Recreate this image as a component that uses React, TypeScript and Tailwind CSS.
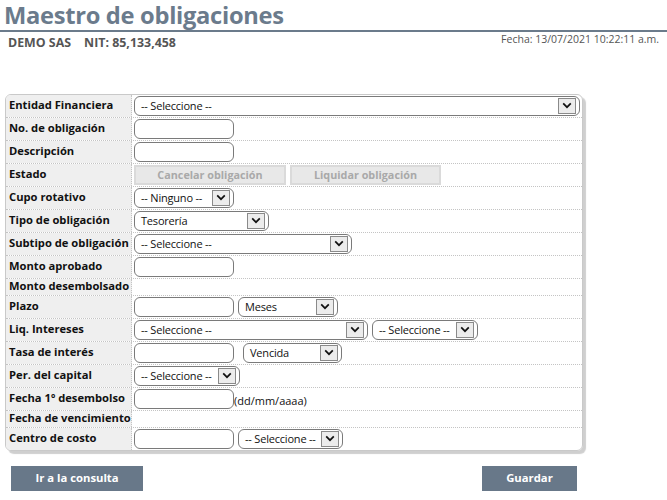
import React from "react";

const Chevron = () => (
  <svg width="10" height="7" viewBox="0 0 10 7">
    <path d="M1.2 1.4 L5 5.2 L8.8 1.4" stroke="#111" strokeWidth="1.7" fill="none" />
  </svg>
);

function Select({ w, text }: { w: string; text: string }) {
  return (
    <div className={`${w} h-[20px] rounded-[6px] border border-[#7a7a7a] bg-white flex items-center justify-between pl-[6px] pr-[3px] shrink-0`}>
      <span className="text-[11px] tracking-[-0.2px] text-[#111] leading-none whitespace-nowrap">{text}</span>
      <div className="w-[18px] h-[16px] border border-[#8a8a8a] bg-[#ececec] flex items-center justify-center shrink-0">
        <Chevron />
      </div>
    </div>
  );
}

function Input() {
  return <div className="w-[100px] h-[20px] rounded-[6px] border border-[#7a7a7a] bg-white shrink-0" />;
}

function Row({ label, children, short, last }: { label: string; children?: React.ReactNode; short?: boolean; last?: boolean }) {
  return (
    <div className={`flex ${last ? "" : "border-b border-dotted border-[#c4c4c4]"}`}>
      <div className={`w-[126px] shrink-0 bg-[#efefef] border-r border-dotted border-[#c4c4c4] pl-[3px] flex items-center ${short ? "h-[16px]" : "h-[22px]"}`}>
        <span className="text-[11.2px] font-bold text-[#111] whitespace-nowrap">{label}</span>
      </div>
      <div className="flex-1 flex items-center pl-[2px] gap-[4px]">{children}</div>
    </div>
  );
}

export default function App() {
  return (
    <div className="w-[667px] h-[500px] bg-white font-['Open_Sans',sans-serif] relative overflow-hidden">
      <div className="border-b-2 border-[#6b7b8b] pl-[4px]">
        <h1 className="text-[23.7px] font-bold text-[#6b7b8c] leading-[30px] tracking-[-0.3px] whitespace-nowrap">Maestro de obligaciones</h1>
      </div>
      <div className="flex justify-between items-start px-[8px]">
        <div className="text-[12.4px] font-bold text-[#555] mt-[2px] whitespace-nowrap flex gap-[13px]">
          <span>DEMO SAS</span>
          <span>NIT: 85,133,458</span>
        </div>
        <div className="text-[10.5px] text-[#555]">Fecha: 13/07/2021 10:22:11 a.m.</div>
      </div>

      <div className="ml-[5px] mt-[41px] w-[578px] border border-[#c9c9c9] rounded-[6px] shadow-[3px_3px_1px_#cfcfcf] overflow-hidden">
        <Row label="Entidad Financiera">
          <Select w="w-[446px]" text="-- Seleccione --" />
        </Row>
        <Row label="No. de obligación"><Input /></Row>
        <Row label="Descripción"><Input /></Row>
        <Row label="Estado">
          <div className="w-[152px] h-[20px] bg-[#e8e8e8] border-2 border-[#dadada] flex items-center justify-center text-[10.8px] font-bold text-[#a9a9a9]">Cancelar obligación</div>
          <div className="w-[151px] h-[20px] bg-[#e8e8e8] border-2 border-[#dadada] flex items-center justify-center text-[10.8px] font-bold text-[#a9a9a9]">Liquidar obligación</div>
        </Row>
        <Row label="Cupo rotativo"><Select w="w-[100px]" text="-- Ninguno --" /></Row>
        <Row label="Tipo de obligación"><Select w="w-[135px]" text="Tesorería" /></Row>
        <Row label="Subtipo de obligación"><Select w="w-[218px]" text="-- Seleccione --" /></Row>
        <Row label="Monto aprobado"><Input /></Row>
        <Row label="Monto desembolsado" short />
        <Row label="Plazo">
          <Input />
          <Select w="w-[100px]" text="Meses" />
        </Row>
        <Row label="Liq. Intereses">
          <Select w="w-[234px]" text="-- Seleccione --" />
          <Select w="w-[106px]" text="-- Seleccione --" />
        </Row>
        <Row label="Tasa de interés">
          <Input />
          <div className="w-[1px]" />
          <Select w="w-[99px]" text="Vencida" />
        </Row>
        <Row label="Per. del capital"><Select w="w-[106px]" text="-- Seleccione --" /></Row>
        <Row label="Fecha 1º desembolso">
          <Input />
          <span className="text-[11px] text-[#111] self-end mb-[0px] -ml-[4px]">(dd/mm/aaaa)</span>
        </Row>
        <Row label="Fecha de vencimiento" short />
        <Row label="Centro de costo" last>
          <Input />
          <Select w="w-[105px]" text="-- Seleccione --" />
        </Row>
      </div>

      <div className="flex justify-between ml-[11px] w-[566px] mt-[15px]">
        <button className="w-[132px] h-[25px] bg-[#687889] text-white text-[11.3px] font-bold">Ir a la consulta</button>
        <button className="w-[95px] h-[25px] bg-[#687889] text-white text-[11.3px] font-bold">Guardar</button>
      </div>
    </div>
  );
}
